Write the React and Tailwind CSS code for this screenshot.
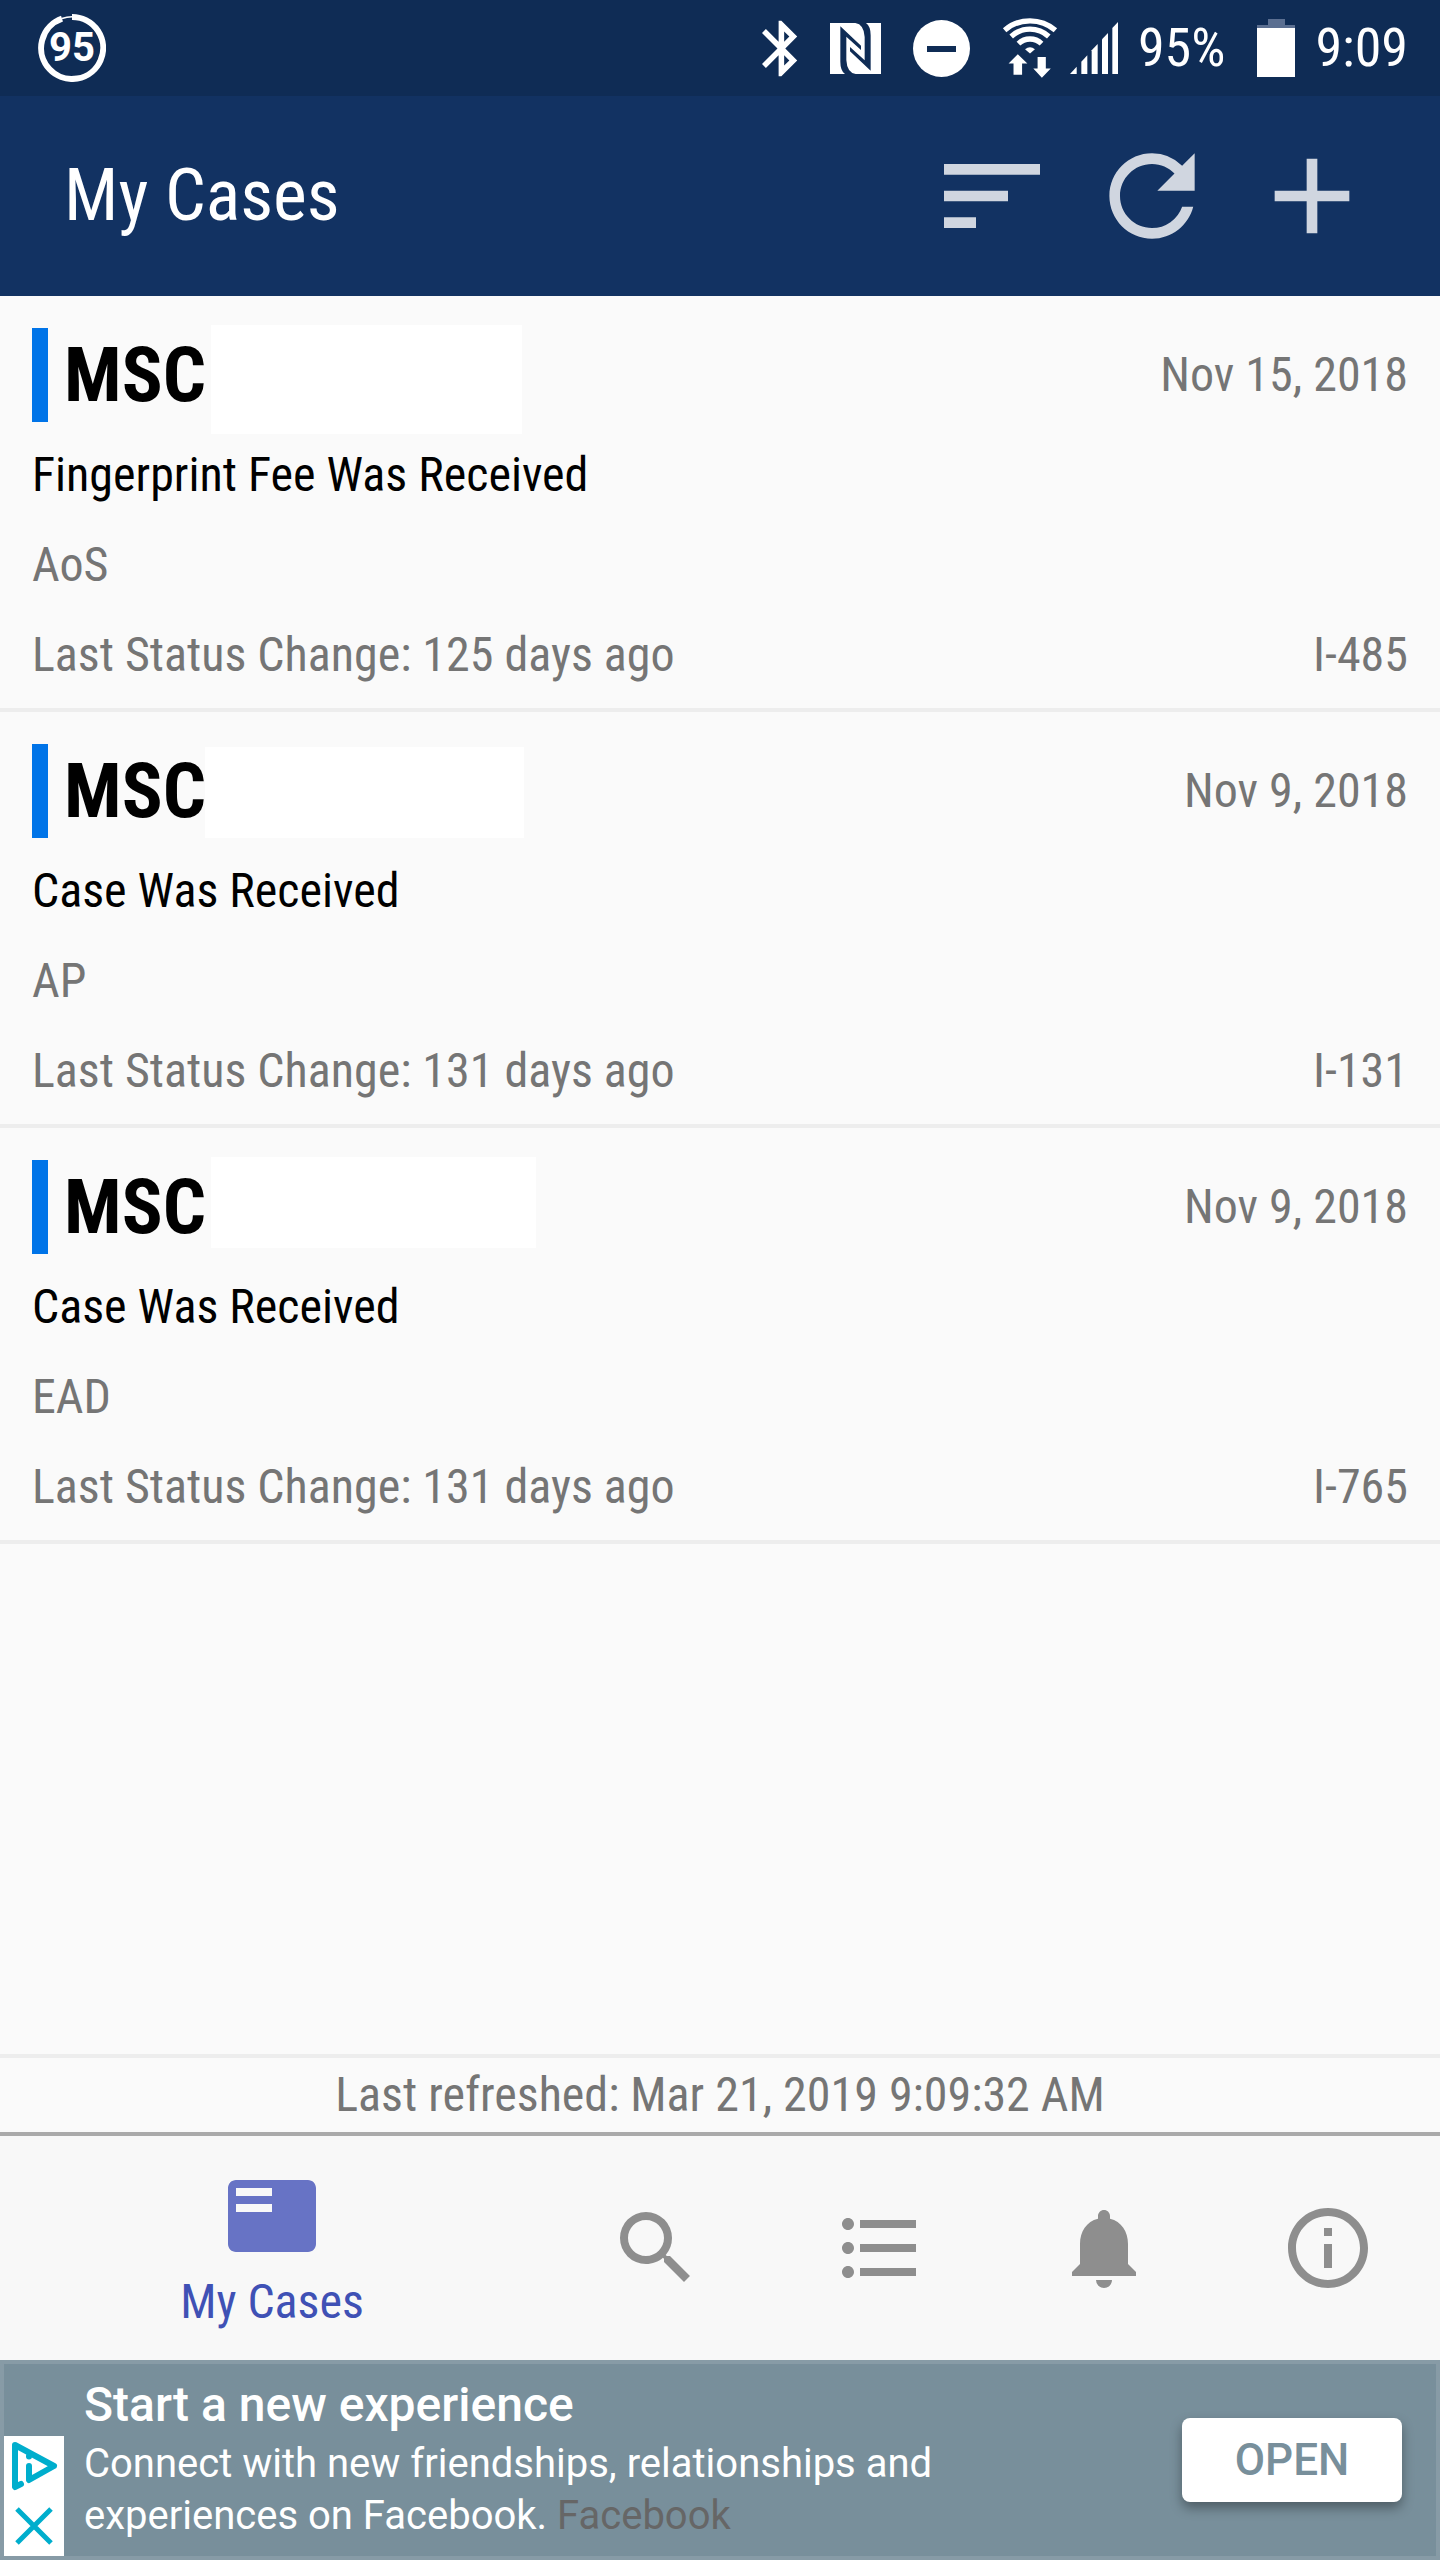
import React from "react";
import {
  MdSort,
  MdRefresh,
  MdAdd,
  MdBluetooth,
  MdFeaturedPlayList,
  MdSearch,
  MdFormatListBulleted,
  MdNotifications,
  MdInfoOutline,
} from "react-icons/md";

const CASES = [
  {
    prefix: "MSC",
    date: "Nov 15, 2018",
    status: "Fingerprint Fee Was Received",
    label: "AoS",
    changed: "Last Status Change: 125 days ago",
    form: "I-485",
    mask: "left-[179px] -top-[3px] w-[311px] h-[109px]",
  },
  {
    prefix: "MSC",
    date: "Nov 9, 2018",
    status: "Case Was Received",
    label: "AP",
    changed: "Last Status Change: 131 days ago",
    form: "I-131",
    mask: "left-[173px] top-[3px] w-[319px] h-[91px]",
  },
  {
    prefix: "MSC",
    date: "Nov 9, 2018",
    status: "Case Was Received",
    label: "EAD",
    changed: "Last Status Change: 131 days ago",
    form: "I-765",
    mask: "left-[179px] -top-[3px] w-[325px] h-[91px]",
  },
];

const TABS = [
  { name: "Search", Icon: MdSearch },
  { name: "List", Icon: MdFormatListBulleted },
  { name: "Notifications", Icon: MdNotifications },
  { name: "Info", Icon: MdInfoOutline },
];

function BatteryBadge() {
  return (
    <div className="relative flex size-[68px] items-center justify-center">
      <svg viewBox="0 0 68 68" className="absolute inset-0 size-full" fill="none" stroke="#fff">
        <path d="M34 3 A31 31 0 1 1 24 4.700" strokeWidth="6" />
        <path d="M24 4.500 A31 31 0 0 1 34 2.800" strokeWidth="1.500" />
      </svg>
      <span className="relative font-['Roboto'] text-[40px] leading-none font-bold">95</span>
    </div>
  );
}

function NfcIcon() {
  const half =
    "M304 79 V185 Q304 212 318 222 H350 Q324 218 322 180 V110 L366 150 V137 Z";
  return (
    <svg viewBox="273 69 153 153" className="size-[51px]" fill="#0f2c55">
      <rect x="273" y="69" width="153" height="153" fill="#fff" />
      <path d={half} />
      <path d={half} transform="rotate(180 349.500 145.500)" />
    </svg>
  );
}

function DoNotDisturbIcon() {
  return (
    <svg viewBox="0 0 57 57" className="size-[57px]">
      <circle cx="28.500" cy="28.500" r="28.500" fill="#fff" />
      <rect x="14" y="26" width="29" height="6" fill="#0f2c55" />
    </svg>
  );
}

function WifiIcon() {
  return (
    <svg viewBox="792 52 168 182" className="h-[60px] w-14" fill="#fff">
      <g fill="none" stroke="#fff" strokeWidth="16">
        <path d="M799 89 A118 118 0 0 1 953 89" />
        <path d="M819 108 A84 84 0 0 1 933 108" />
        <path d="M841 130 A50 50 0 0 1 911 130" />
      </g>
      <path d="M861 147 Q876 135 891 147 L876 160 Z" />
      <path d="M839 162 L868 190 H852 V224 H826 V190 H811 Z" />
      <path d="M899 170 H924 V205 H939 L912 233 L886 205 H899 Z" />
    </svg>
  );
}

function SignalIcon() {
  return (
    <svg viewBox="996 66 144 156" className="h-[52px] w-12" fill="#fff">
      <path d="M996 222 L1016 200 V222 Z" />
      <path d="M1030 222 V185 L1048 166 V222 Z" />
      <path d="M1061 222 V151 L1079 132 V222 Z" />
      <path d="M1092 222 V118 L1110 99 V222 Z" />
      <path d="M1123 222 V84 L1140 66 V222 Z" />
    </svg>
  );
}

function BatteryIcon() {
  return (
    <svg viewBox="0 0 38 58" className="h-[58px] w-[38px]" fill="#fff">
      <path d="M11 0 H28 V6 H38 V9 H0 V6 H11 Z" fill="#5b6f91" />
      <rect y="9" width="38" height="49" />
    </svg>
  );
}

function StatusBar() {
  return (
    <div className="flex h-24 items-center justify-between bg-[#0f2c55] pr-8 pl-[38px] text-white">
      <BatteryBadge />
      <div className="flex items-center gap-8">
        <MdBluetooth viewBox="5 2 13 20" className="h-[57px] w-9" />
        <NfcIcon />
        <DoNotDisturbIcon />
        <div className="flex items-center gap-3">
          <WifiIcon />
          <SignalIcon />
          <span className="ml-2 text-[54px] leading-none">95%</span>
        </div>
        <div className="flex items-center gap-5">
          <BatteryIcon />
          <span className="text-[54px] leading-none">9:09</span>
        </div>
      </div>
    </div>
  );
}

function AppBar() {
  return (
    <header className="flex h-[200px] items-center justify-between bg-[#123262] px-16">
      <h1 className="text-[72px] leading-none text-white">My Cases</h1>
      <div className="flex gap-8 text-[#d0d6e0]">
        <button type="button" aria-label="Sort">
          <MdSort className="size-32" />
        </button>
        <button type="button" aria-label="Refresh">
          <MdRefresh className="size-32" />
        </button>
        <button type="button" aria-label="Add case">
          <MdAdd className="size-32" />
        </button>
      </div>
    </header>
  );
}

function CaseRow({ item }) {
  return (
    <li className="border-b-4 border-[#ededed] px-8 pt-8 pb-2 text-[48px] leading-[90px] text-[#757575]">
      <div className="relative mb-2 flex h-[94px] items-center justify-between">
        <div className="flex h-full items-center gap-4">
          <span className="h-full w-4 bg-[#0074e8]" />
          <h2 className="text-[76px] leading-none font-bold text-black">{item.prefix}</h2>
        </div>
        <span className={`absolute bg-white ${item.mask}`} />
        <span>{item.date}</span>
      </div>
      <p className="text-black">{item.status}</p>
      <p>{item.label}</p>
      <div className="flex justify-between">
        <span>{item.changed}</span>
        <span>{item.form}</span>
      </div>
    </li>
  );
}

function BottomNav() {
  return (
    <nav className="grid h-56 grid-cols-[17fr_7fr_7fr_7fr_7fr] bg-[#f8f8f8] text-[#8e8e8e]">
      <button type="button" className="flex flex-col items-center pt-8 text-[#3f51b5]">
        <MdFeaturedPlayList className="size-24 text-[#6773c5]" />
        <span className="text-[48px] leading-[76px]">My Cases</span>
      </button>
      {TABS.map(({ name, Icon }) => (
        <button key={name} type="button" aria-label={name} className="flex items-center justify-center">
          <Icon className="size-24" />
        </button>
      ))}
    </nav>
  );
}

function AdBanner() {
  return (
    <aside className="flex h-[200px] items-end border-4 border-[#879ba6] bg-[#788f9b] font-['Roboto'] text-white">
      <div className="flex w-[60px] flex-col bg-white text-[#00aecd]">
        <button type="button" aria-label="About this ad">
          <svg viewBox="0 0 60 60" className="size-[60px]" fill="none" stroke="currentColor" strokeWidth="6" strokeLinecap="round" strokeLinejoin="round">
            <path d="M17 48 L11 51 V9 L50 30 L25 44 V30" />
            <path d="M25 20 V20.500" />
          </svg>
        </button>
        <button type="button" aria-label="Close ad">
          <svg viewBox="0 0 60 60" className="size-[60px]" fill="none" stroke="currentColor" strokeWidth="5">
            <path d="M13 13 L47 47 M47 13 L13 47" />
          </svg>
        </button>
      </div>
      <div className="flex-1 self-center pb-[6px] pl-5">
        <p className="text-[48px] leading-[66px] font-medium">Start a new experience</p>
        <p className="text-[40px] leading-[52px]">
          Connect with new friendships, relationships and
          <br />
          experiences on Facebook. <span className="text-[#666666]">Facebook</span>
        </p>
      </div>
      <button
        type="button"
        className="mr-[34px] h-[84px] w-[220px] self-center rounded-lg bg-white text-[44px] font-medium text-[#788f9b] shadow-[0_6px_12px_rgba(0,0,0,0.35)]"
      >
        OPEN
      </button>
    </aside>
  );
}

export default function App() {
  return (
    <div className="flex min-h-screen flex-col bg-[#fafafa] font-['Roboto_Condensed','Lato',sans-serif]">
      <StatusBar />
      <AppBar />
      <main className="flex flex-1 flex-col">
        <ul className="flex-1">
          {CASES.map((item) => (
            <CaseRow key={item.form} item={item} />
          ))}
        </ul>
        <p className="border-t-4 border-b-4 border-t-[#ededed] border-b-[#aaaaaa] text-center text-[48px] leading-[74px] text-[#757575]">
          Last refreshed: Mar 21, 2019 9:09:32 AM
        </p>
      </main>
      <BottomNav />
      <AdBanner />
    </div>
  );
}
